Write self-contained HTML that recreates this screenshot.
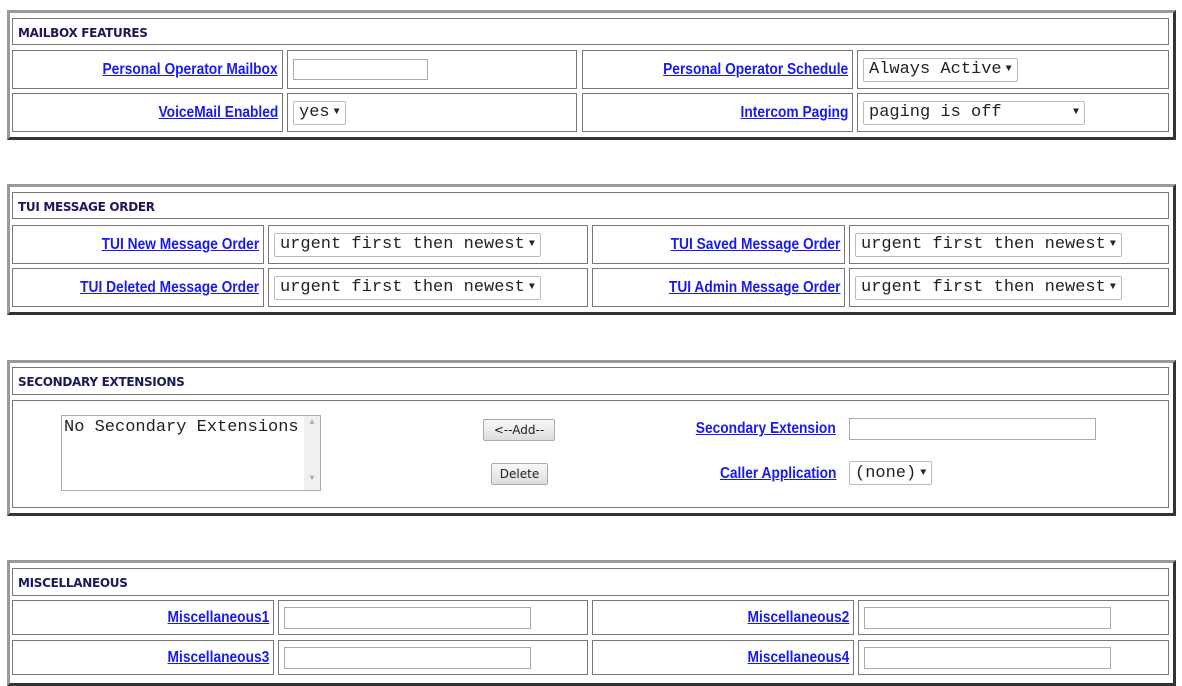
<!DOCTYPE html>
<html><head><meta charset="utf-8"><style>
body{margin:0;width:1182px;height:686px;background:#fff;position:relative;overflow:hidden;font-family:"Liberation Sans",Arial,sans-serif}
.o{position:absolute;left:7px;width:1169px;border-top:3px solid #999;border-left:3px solid #999;border-right:3px solid #333;border-bottom:3px solid #333;box-sizing:border-box}
.c{position:absolute;border:1px solid #777;box-sizing:border-box;background:#fff}
.h{font:bold 12px "DejaVu Sans",sans-serif;color:#1a1a5a;padding:7px 0 0 5px;letter-spacing:-0.3px}
.l{text-align:right;padding-right:4px;display:flex;align-items:center;justify-content:flex-end}
.l a{color:#1a1aee;font-weight:bold;font-size:16px;font-family:"Liberation Sans",Arial,sans-serif;text-decoration:underline;display:inline-block;transform:scaleX(0.86);transform-origin:right center;white-space:nowrap}
.v{display:flex;align-items:center;padding-left:5px}
.in{height:21px;border:1px solid #aaa;box-sizing:border-box;background:#fff}
.sel{height:24px;border:1px solid #bbb;border-radius:2px;box-sizing:border-box;background:#fff;font:17px "Liberation Mono","Courier New",monospace;color:#222;padding:0 5px;display:flex;align-items:center;justify-content:space-between;white-space:nowrap}
.sel i{font-style:normal;font-size:10px;margin-left:4px}
.btn{position:absolute;border:1px solid #aaa;border-radius:2px;background:linear-gradient(#f8f8f8,#ddd);font:12px "DejaVu Sans",sans-serif;color:#222;display:flex;align-items:center;justify-content:center;box-sizing:border-box}
</style></head><body>

<div class="o" style="top:10px;height:130px"></div>
<div class="c h" style="left:12px;top:18px;width:1157px;height:27px">MAILBOX FEATURES</div>
<div class="c l" style="left:12px;top:50px;width:271px;height:39px"><a>Personal Operator Mailbox</a></div>
<div class="c v" style="left:287px;top:50px;width:290px;height:39px"><div class="in" style="width:135px"></div></div>
<div class="c l" style="left:582px;top:50px;width:271px;height:39px"><a>Personal Operator Schedule</a></div>
<div class="c v" style="left:857px;top:50px;width:312px;height:39px"><div class="sel">Always Active<i>▼</i></div></div>
<div class="c l" style="left:12px;top:93px;width:271px;height:39px"><a>VoiceMail Enabled</a></div>
<div class="c v" style="left:287px;top:93px;width:290px;height:39px"><div class="sel">yes<i>▼</i></div></div>
<div class="c l" style="left:582px;top:93px;width:271px;height:39px"><a>Intercom Paging</a></div>
<div class="c v" style="left:857px;top:93px;width:312px;height:39px"><div class="sel" style="width:222px">paging is off<i>▼</i></div></div>

<div class="o" style="top:184px;height:131px"></div>
<div class="c h" style="left:12px;top:192px;width:1157px;height:27px">TUI MESSAGE ORDER</div>
<div class="c l" style="left:12px;top:225px;width:252px;height:39px"><a>TUI New Message Order</a></div>
<div class="c v" style="left:268px;top:225px;width:320px;height:39px"><div class="sel">urgent first then newest<i>▼</i></div></div>
<div class="c l" style="left:592px;top:225px;width:253px;height:39px"><a>TUI Saved Message Order</a></div>
<div class="c v" style="left:849px;top:225px;width:320px;height:39px"><div class="sel">urgent first then newest<i>▼</i></div></div>
<div class="c l" style="left:12px;top:268px;width:252px;height:39px"><a>TUI Deleted Message Order</a></div>
<div class="c v" style="left:268px;top:268px;width:320px;height:39px"><div class="sel">urgent first then newest<i>▼</i></div></div>
<div class="c l" style="left:592px;top:268px;width:253px;height:39px"><a>TUI Admin Message Order</a></div>
<div class="c v" style="left:849px;top:268px;width:320px;height:39px"><div class="sel">urgent first then newest<i>▼</i></div></div>

<div class="o" style="top:360px;height:156px"></div>
<div class="c h" style="left:12px;top:367px;width:1157px;height:28px">SECONDARY EXTENSIONS</div>
<div class="c" style="left:12px;top:400px;width:1157px;height:108px"></div>
<div style="position:absolute;left:61px;top:415px;width:260px;height:76px;border:1px solid #aaa;box-sizing:border-box;font:17px 'Liberation Mono','Courier New',monospace;color:#222;padding:2px 0 0 2px;white-space:nowrap;overflow:hidden">No Secondary Extensions<div style="position:absolute;right:0;top:0;width:16px;height:74px;background:#f0f0f0;font-size:8px;color:#aaa;text-align:center;line-height:14px">▲<br><br><br><br>▼</div></div>
<div class="btn" style="left:483px;top:419px;width:72px;height:22px">&lt;--Add--</div>
<div class="btn" style="left:491px;top:463px;width:57px;height:22px">Delete</div>
<div class="l" style="position:absolute;left:600px;top:418px;width:240px;height:22px;box-sizing:border-box"><a>Secondary Extension</a></div>
<div class="in" style="position:absolute;left:849px;top:418px;width:247px;height:22px"></div>
<div class="l" style="position:absolute;left:600px;top:463px;width:240px;height:22px;box-sizing:border-box"><a>Caller Application</a></div>
<div class="sel" style="position:absolute;left:849px;top:461px">(none)<i>▼</i></div>

<div class="o" style="top:560px;height:126px;border-bottom:3px solid #333"></div>
<div class="c h" style="left:12px;top:568px;width:1157px;height:28px">MISCELLANEOUS</div>
<div class="c l" style="left:12px;top:600px;width:262px;height:35px"><a>Miscellaneous1</a></div>
<div class="c v" style="left:278px;top:600px;width:310px;height:35px"><div class="in" style="width:247px;height:22px"></div></div>
<div class="c l" style="left:592px;top:600px;width:262px;height:35px"><a>Miscellaneous2</a></div>
<div class="c v" style="left:858px;top:600px;width:311px;height:35px"><div class="in" style="width:247px;height:22px"></div></div>
<div class="c l" style="left:12px;top:640px;width:262px;height:35px"><a>Miscellaneous3</a></div>
<div class="c v" style="left:278px;top:640px;width:310px;height:35px"><div class="in" style="width:247px;height:22px"></div></div>
<div class="c l" style="left:592px;top:640px;width:262px;height:35px"><a>Miscellaneous4</a></div>
<div class="c v" style="left:858px;top:640px;width:311px;height:35px"><div class="in" style="width:247px;height:22px"></div></div>
</body></html>
